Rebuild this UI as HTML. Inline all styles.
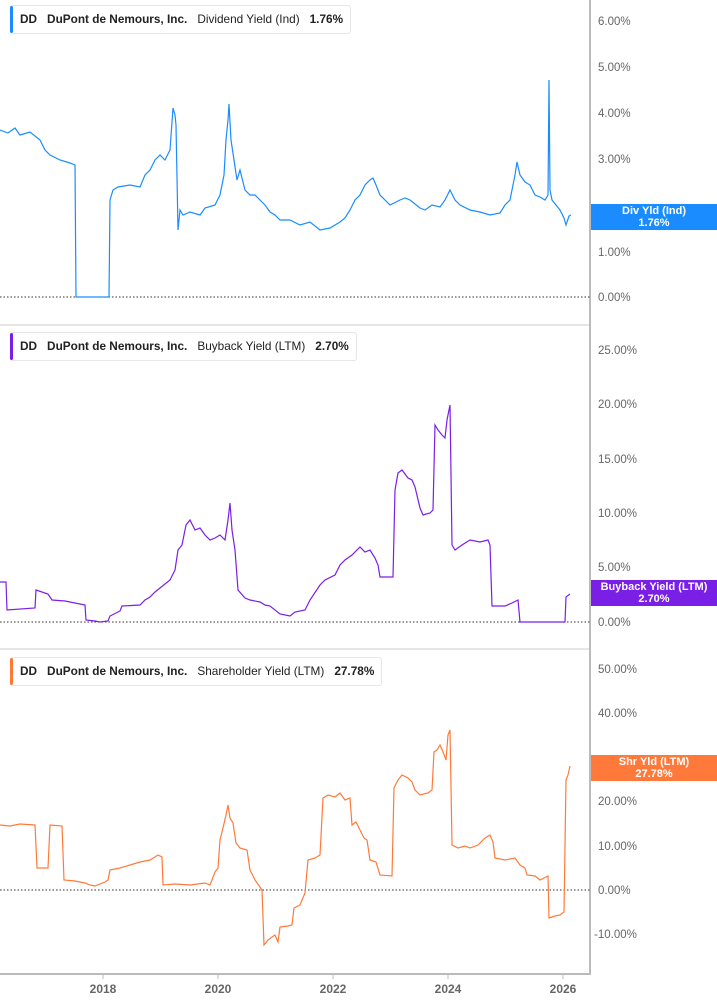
<!DOCTYPE html><html><head><meta charset="utf-8"><style>
body{margin:0;width:717px;height:1005px;background:#fff;font-family:"Liberation Sans",sans-serif;overflow:hidden;position:relative}
.hdr{position:absolute;left:10px;height:27px;background:#fff;border:1px solid #e6e6e6;border-left:none;border-radius:3px;font-size:11.8px;font-weight:bold;color:#222;line-height:27px;padding:0 7px 0 10px;white-space:nowrap}
.hdr b{position:absolute;left:0;top:0;bottom:0;width:3px;border-radius:2px}
.hdr span{margin-right:10px}
.hdr .m{font-weight:normal;color:#222}
.lab{position:absolute;left:591px;width:126px;color:#fff;font-size:11px;font-weight:bold;text-align:center;line-height:12px;padding:1px 0}
</style></head><body>
<svg width="717" height="1005" style="position:absolute;left:0;top:0" font-family="Liberation Sans" font-size="11.5" fill="#666">
<line x1="0" y1="325" x2="590" y2="325" stroke="#ccc"/>
<line x1="0" y1="649" x2="590" y2="649" stroke="#ccc"/>
<line x1="590" y1="0" x2="590" y2="974" stroke="#bbb" stroke-width="2"/>
<line x1="0" y1="974" x2="591" y2="974" stroke="#bbb" stroke-width="2"/>
<g stroke="#333" stroke-dasharray="1.5,2"><line x1="0" y1="297" x2="590" y2="297"/><line x1="0" y1="622" x2="590" y2="622"/><line x1="0" y1="890" x2="590" y2="890"/></g>
<g><text x="598" y="25">6.00%</text><text x="598" y="71">5.00%</text><text x="598" y="117">4.00%</text><text x="598" y="163">3.00%</text><text x="598" y="256">1.00%</text><text x="598" y="301">0.00%</text>
<text x="598" y="354">25.00%</text><text x="598" y="408">20.00%</text><text x="598" y="463">15.00%</text><text x="598" y="517">10.00%</text><text x="598" y="571">5.00%</text><text x="598" y="626">0.00%</text>
<text x="598" y="673">50.00%</text><text x="598" y="717">40.00%</text><text x="598" y="805">20.00%</text><text x="598" y="850">10.00%</text><text x="598" y="894">0.00%</text><text x="594" y="938">-10.00%</text></g>
<g font-weight="bold" fill="#666" font-size="12" text-anchor="middle"><text x="103" y="993">2018</text><text x="218" y="993">2020</text><text x="333" y="993">2022</text><text x="448" y="993">2024</text><text x="563" y="993">2026</text></g>
<g stroke="#bbb"><line x1="103" y1="974" x2="103" y2="979"/><line x1="218" y1="974" x2="218" y2="979"/><line x1="333" y1="974" x2="333" y2="979"/><line x1="448" y1="974" x2="448" y2="979"/><line x1="563" y1="974" x2="563" y2="979"/></g>
<polyline fill="none" stroke="#1a8cff" stroke-width="1.2" points="0,130 8,133 15,128 20,135 30,132 40,140 45,150 50,155 60,160 70,163 75,165 76,297 109,297 110,200 113,190 118,187 130,185 140,187 145,175 150,170 155,160 160,155 165,160 170,150 173,108 175,115 176,125 178,230 180,210 183,215 190,212 200,215 205,208 215,205 220,195 224,175 226,140 228,120 229,104 231,140 234,160 237,180 240,170 245,190 250,195 255,195 260,200 265,205 270,212 275,215 280,220 290,220 300,225 310,222 320,230 330,228 340,222 345,218 350,210 355,200 360,195 365,185 370,180 373,178 376,185 380,195 385,200 390,205 400,200 405,198 410,200 420,208 425,210 432,205 440,207 445,200 450,190 455,200 460,205 470,210 480,212 490,215 500,213 505,205 510,200 515,175 517,162 520,175 525,182 530,185 535,195 540,197 545,200 548,195 549,80 550,190 552,200 556,205 560,210 564,218 566,225 569,216 571,215"/>
<polyline fill="none" stroke="#7a1fe6" stroke-width="1.2" points="0,582 6,582 7,610 35,608 36,590 48,594 52,600 65,601 70,602 85,605 86,620 95,621 100,622 108,621 110,616 120,611 122,606 140,605 145,600 150,597 155,592 160,588 170,580 175,570 178,550 182,545 186,525 190,520 195,530 200,528 205,535 210,540 215,538 220,535 225,540 228,520 230,503 232,530 235,550 238,590 245,598 250,600 260,602 265,605 270,606 280,614 290,616 295,612 305,610 310,600 320,585 325,580 335,575 340,565 345,560 352,555 360,547 365,552 370,550 375,558 378,565 380,577 393,577 395,490 398,473 402,470 408,478 412,480 415,487 420,508 423,515 430,513 433,510 435,425 438,430 442,435 445,438 447,420 450,405 452,545 455,550 462,545 470,540 480,542 488,540 490,545 492,606 505,606 512,603 518,600 520,622 565,622 566,597 570,594"/>
<polyline fill="none" stroke="#ff7a3a" stroke-width="1.2" points="0,825 10,826 20,824 35,825 37,868 48,868 50,825 62,826 64,880 75,881 85,883 90,885 95,886 105,882 108,880 110,870 120,868 130,865 140,862 150,860 158,855 162,857 163,885 175,884 190,885 205,883 210,885 212,880 215,872 218,868 220,840 223,828 226,815 228,805 230,818 233,823 236,843 240,848 247,850 250,870 255,880 262,890 264,945 268,940 272,937 275,935 278,942 280,927 288,926 292,925 294,908 300,905 305,893 308,860 315,858 320,855 323,798 328,795 335,797 340,793 345,800 350,798 352,825 356,822 360,830 364,838 367,840 370,860 376,862 380,875 392,876 394,788 398,780 402,775 408,778 412,782 415,790 420,795 428,793 432,790 434,752 437,750 440,745 443,752 446,760 448,735 450,730 452,845 458,848 465,846 470,848 478,845 485,838 490,835 493,842 495,858 505,860 515,858 520,865 525,868 527,875 535,876 540,880 548,876 549,918 555,916 560,915 564,912 566,780 568,775 570,766"/>
</svg>
<div class="hdr" style="top:5px"><b style="background:#1a8cff"></b><span>DD</span><span>DuPont de Nemours, Inc.</span><span class="m">Dividend Yield (Ind)</span>1.76%</div>
<div class="hdr" style="top:332px"><b style="background:#7a1fe6"></b><span>DD</span><span>DuPont de Nemours, Inc.</span><span class="m">Buyback Yield (LTM)</span>2.70%</div>
<div class="hdr" style="top:657px"><b style="background:#ff7a3a"></b><span>DD</span><span>DuPont de Nemours, Inc.</span><span class="m">Shareholder Yield (LTM)</span>27.78%</div>
<div class="lab" style="top:204px;background:#1a8cff">Div Yld (Ind)<br>1.76%</div>
<div class="lab" style="top:580px;background:#7a1fe6">Buyback Yield (LTM)<br>2.70%</div>
<div class="lab" style="top:755px;background:#ff7a3a">Shr Yld (LTM)<br>27.78%</div>
</body></html>
